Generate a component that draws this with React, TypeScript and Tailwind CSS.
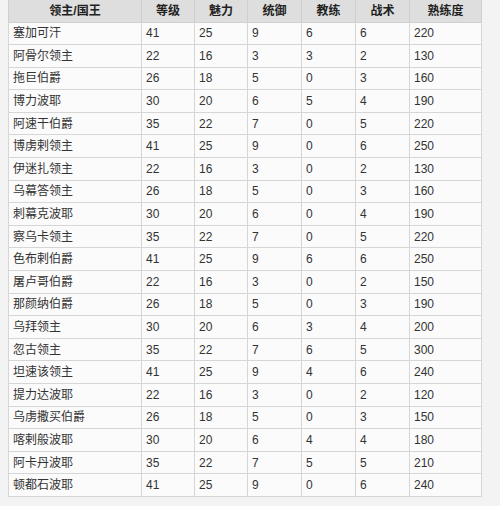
import React from 'react';

const ROWS: [string, number, number, number, number, number, number][] = [
  ['塞加可汗', 41, 25, 9, 6, 6, 220],
  ['阿骨尔领主', 22, 16, 3, 3, 2, 130],
  ['拖巨伯爵', 26, 18, 5, 0, 3, 160],
  ['博力波耶', 30, 20, 6, 5, 4, 190],
  ['阿速干伯爵', 35, 22, 7, 0, 5, 220],
  ['博虏剌领主', 41, 25, 9, 0, 6, 250],
  ['伊迷扎领主', 22, 16, 3, 0, 2, 130],
  ['乌幕答领主', 26, 18, 5, 0, 3, 160],
  ['刺幕克波耶', 30, 20, 6, 0, 4, 190],
  ['察乌卡领主', 35, 22, 7, 0, 5, 220],
  ['色布剌伯爵', 41, 25, 9, 6, 6, 250],
  ['屠卢哥伯爵', 22, 16, 3, 0, 2, 150],
  ['那颜纳伯爵', 26, 18, 5, 0, 3, 190],
  ['乌拜领主', 30, 20, 6, 3, 4, 200],
  ['忽古领主', 35, 22, 7, 6, 5, 300],
  ['坦速该领主', 41, 25, 9, 4, 6, 240],
  ['提力达波耶', 22, 16, 3, 0, 2, 120],
  ['乌虏撒买伯爵', 26, 18, 5, 0, 3, 150],
  ['喀剌般波耶', 30, 20, 6, 4, 4, 180],
  ['阿卡丹波耶', 35, 22, 7, 5, 5, 210],
  ['顿都石波耶', 41, 25, 9, 0, 6, 240],
];

const HEADERS = ['领主/国王', '等级', '魅力', '统御', '教练', '战术', '熟练度'];
const WIDTHS = ['w-[133px]', 'w-[53px]', 'w-[53px]', 'w-[54px]', 'w-[54px]', 'w-[54px]', 'w-[72px]'];

const App: React.FC = () => {
  return (
    <div
      className="w-[500px] h-[506px] bg-[#f3f3f3] pl-[8px] pr-[19px] overflow-hidden text-[#333] text-[12px]"
      style={{ fontFamily: '"Liberation Sans", "Noto Sans CJK SC", sans-serif' }}
    >
      <table className="w-[473px] border-collapse table-fixed bg-white">
        <thead>
          <tr className="h-[22px] bg-[#dedede]">
            {HEADERS.map((h, i) => (
              <th key={h} className={`${WIDTHS[i]} border border-[#cfcfcf] border-t-0 font-bold text-center text-[#222] p-0`}>
                {h}
              </th>
            ))}
          </tr>
        </thead>
        <tbody>
          {ROWS.map((row, idx) => (
            <tr key={idx} className="h-[22.6px] bg-[#fbfbfb]">
              {row.map((cell, j) => (
                <td key={j} className="border border-[#d6d6d6] pl-[4px] py-0 font-normal">
                  {cell}
                </td>
              ))}
            </tr>
          ))}
        </tbody>
      </table>
    </div>
  );
};

export default App;
